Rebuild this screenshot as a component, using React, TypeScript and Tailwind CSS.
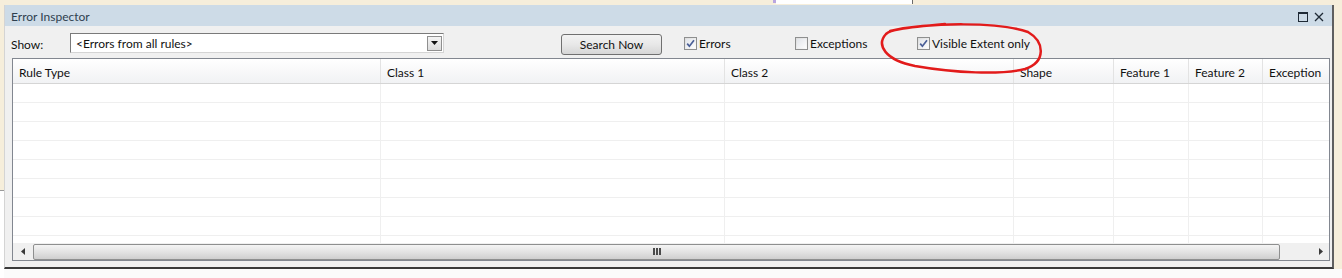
import React from "react";

const cols = [
  { label: "Rule Type", w: 368 },
  { label: "Class 1", w: 344 },
  { label: "Class 2", w: 289 },
  { label: "Shape", w: 100 },
  { label: "Feature 1", w: 75 },
  { label: "Feature 2", w: 74 },
  { label: "Exception", w: 66 },
];

function CheckBox({ checked }: { checked: boolean }) {
  return (
    <div className="w-[13px] h-[13px] shrink-0 border border-[#8e8f8f] bg-gradient-to-br from-[#dcdcdc] to-[#fbfbfb] flex items-center justify-center">
      <div className="w-[9px] h-[9px] bg-gradient-to-br from-[#e2e5ea] to-[#fcfcfc] flex items-center justify-center">
        {checked && (
          <svg width="9" height="9" viewBox="0 0 9 9">
            <path d="M1.2 4.6 L3.4 7.2 L8 1.2" stroke="#4a5f97" strokeWidth="1.7" fill="none" />
          </svg>
        )}
      </div>
    </div>
  );
}

export default function App() {
  const rows = Array.from({ length: 9 });
  return (
    <div
      className="relative w-[1342px] h-[278px] bg-[#f6eedb] overflow-hidden text-[12px] text-[#111]"
      style={{ fontFamily: 'Lato, "Noto Sans", sans-serif' }}
    >
      {/* top strip */}
      <div className="h-[5px] flex">
        <div className="w-[773px]" />
        <div className="w-[3px] h-[3px] bg-[#b9a6e0]" />
        <div className="w-[137px] h-[4px] bg-white border-r border-[#6a6a6a]" />
      </div>
      <div className="flex h-[273px]">
        {/* left strip */}
        <div className="w-[4px] flex flex-col">
          <div className="h-[186px] bg-[#f6eedb] border-b border-[#9a9a9a]" />
          <div className="flex-1 bg-white" />
        </div>
        {/* panel */}
        <div className="w-[1330px] flex flex-col">
          <div className="h-[264px] flex flex-col bg-[#f0f0f0] border-l border-[#d4d4d4] border-r-2 border-r-[#5f5f5f] border-b-2 border-b-[#3a3a3a]">
            {/* title bar */}
            <div className="h-[21px] bg-[#cddbe7] flex items-center pl-[6px] pr-[8px]">
              <span className="text-[#2f3f4f] pt-[2px]">Error Inspector</span>
              <div className="ml-auto flex items-center gap-[6px] pt-[3px]">
                <svg width="10" height="10" viewBox="0 0 10 10">
                  <rect x="0.5" y="0.5" width="9" height="9" fill="none" stroke="#1f2a36" strokeWidth="1" />
                  <rect x="0.5" y="0.5" width="9" height="1.5" fill="#1f2a36" />
                </svg>
                <svg width="10" height="10" viewBox="0 0 10 10">
                  <path d="M1 1 L9 9 M9 1 L1 9" stroke="#1f2a36" strokeWidth="1.3" />
                </svg>
              </div>
            </div>
            {/* toolbar */}
            <div className="h-[32px] flex items-center pl-[6px] pt-[3px]">
              <span className="w-[59px] pt-[2px]">Show:</span>
              <div className="w-[374px] h-[20px] -mt-[1px] border border-[#7a7a7a] border-r-[#d4d4d4] border-b-[#d4d4d4] bg-white flex items-center">
                <span className="pl-[5px] flex-1 pt-[1px]">&lt;Errors from all rules&gt;</span>
                <div className="w-[15px] h-[15px] mr-[1px] border border-[#8f8f8f] bg-gradient-to-b from-[#f4f4f4] to-[#dcdcdc] flex items-center justify-center">
                  <svg width="7" height="4" viewBox="0 0 7 4">
                    <path d="M0 0 L7 0 L3.5 4 Z" fill="#111" />
                  </svg>
                </div>
              </div>
              <div className="w-[117px]" />
              <div className="w-[101px] h-[21px] mt-[1px] rounded-[3px] border border-[#707070] bg-gradient-to-b from-[#f3f3f3] via-[#e8e8e8] to-[#d6d6d6] flex items-center justify-center pt-[1px]">
                Search Now
              </div>
              <div className="w-[22px]" />
              <div className="w-[111px] flex items-center gap-[2px]">
                <CheckBox checked />
                <span>Errors</span>
              </div>
              <div className="w-[122px] flex items-center gap-[2px]">
                <CheckBox checked={false} />
                <span>Exceptions</span>
              </div>
              <div className="flex items-center gap-[2px]">
                <CheckBox checked />
                <span>Visible Extent only</span>
              </div>
            </div>
            {/* grid */}
            <div className="ml-[7px] w-[1318px] h-[203px] border border-[#828790] bg-white flex flex-col">
              <div className="h-[25px] flex bg-gradient-to-b from-white to-[#f1f2f4] border-b border-[#d5d5d5]">
                {cols.map((c, i) => (
                  <div
                    key={i}
                    className="h-full flex items-center pl-[6px] pt-[3px] border-r border-[#e3e3e3] last:border-r-0"
                    style={{ width: c.w }}
                  >
                    {c.label}
                  </div>
                ))}
              </div>
              <div className="flex-1 overflow-hidden flex flex-col">
                {rows.map((_, r) => (
                  <div key={r} className="h-[19px] shrink-0 flex border-b border-[#efefef]">
                    {cols.map((c, i) => (
                      <div
                        key={i}
                        className="h-full border-r border-[#efefef] last:border-r-0"
                        style={{ width: c.w }}
                      />
                    ))}
                  </div>
                ))}
              </div>
              {/* horizontal scrollbar */}
              <div className="h-[17px] shrink-0 flex items-center bg-[#f0f0f0]">
                <div className="w-[20px] h-full flex items-center justify-center">
                  <svg width="4" height="7" viewBox="0 0 4 7">
                    <path d="M4 0 L4 7 L0 3.5 Z" fill="#3a3a3a" />
                  </svg>
                </div>
                <div className="w-[1247px] h-[16px] rounded-[2px] border border-[#8e8f8f] bg-gradient-to-b from-[#f4f4f4] via-[#e3e3e3] to-[#cfcfcf] flex items-center justify-center">
                  <div className="flex gap-[1px]">
                    <div className="w-[2px] h-[7px] bg-[#4a4a4a]" />
                    <div className="w-[2px] h-[7px] bg-[#4a4a4a]" />
                    <div className="w-[2px] h-[7px] bg-[#4a4a4a]" />
                  </div>
                </div>
                <div className="flex-1" />
                <div className="w-[17px] h-full flex items-center justify-center">
                  <svg width="4" height="7" viewBox="0 0 4 7">
                    <path d="M0 0 L0 7 L4 3.5 Z" fill="#3a3a3a" />
                  </svg>
                </div>
              </div>
            </div>
          </div>
          <div className="flex-1 bg-[#fbfbfb]" />
        </div>
        <div className="flex-1 flex flex-col">
          <div className="h-[264px]" />
          <div className="flex-1 bg-[#fbfbfb]" />
        </div>
      </div>
      {/* red hand-drawn ellipse annotation */}
      <svg className="absolute left-0 top-0 pointer-events-none" width="1342" height="278">
        <path
          d="M890 31 C 930 22, 1000 22, 1028 32 C 1045 42, 1046 62, 1025 69 C 1000 75, 955 73, 915 66 C 885 60, 876 45, 886 34 C 890 30, 900 28, 945 24"
          fill="none"
          stroke="#e21b1b"
          strokeWidth="2.5"
          strokeLinecap="round"
        />
      </svg>
    </div>
  );
}
